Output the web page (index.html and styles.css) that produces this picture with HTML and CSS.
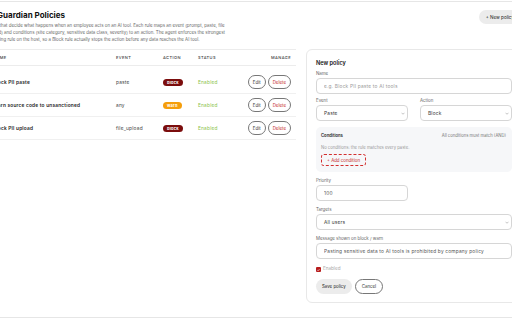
FILE: index.html
```html
<!DOCTYPE html>
<html lang="en">
<head>
  <meta charset="UTF-8">
  <meta name="viewport" content="width=device-width, initial-scale=1.0">
  <title>AI Guardian Policies</title>
  <link rel="stylesheet" href="styles.css">
</head>
<body>
  <div class="frame">
    <div class="page">
      <div class="page-head">
        <div>
          <h1>AI Guardian Policies</h1>
          <p class="lede">Rules that decide what happens when an employee acts on an AI tool. Each rule maps an event (prompt, paste, file<br>upload) and conditions (site category, sensitive data class, severity) to an action. The agent enforces the strongest<br>matching rule on the host, so a Block rule actually stops the action before any data reaches the AI tool.</p>
        </div>
        <button class="btn-soft new-btn">+ New policy</button>
      </div>

      <div class="layout">
        <table class="policies">
          <thead>
            <tr>
              <th class="col-name">Name</th>
              <th class="col-event">Event</th>
              <th class="col-action">Action</th>
              <th class="col-status">Status</th>
              <th class="col-manage">Manage</th>
            </tr>
          </thead>
          <tbody>
            <tr>
              <td class="name">Block PII paste</td>
              <td class="event">paste</td>
              <td><span class="badge block">block</span></td>
              <td class="status">Enabled</td>
              <td class="manage"><button class="btn-line">Edit</button><button class="btn-line danger">Delete</button></td>
            </tr>
            <tr>
              <td class="name">Warn source code to unsanctioned</td>
              <td class="event">any</td>
              <td><span class="badge warn">warn</span></td>
              <td class="status">Enabled</td>
              <td class="manage"><button class="btn-line">Edit</button><button class="btn-line danger">Delete</button></td>
            </tr>
            <tr>
              <td class="name">Block PII upload</td>
              <td class="event">file_upload</td>
              <td><span class="badge block">block</span></td>
              <td class="status">Enabled</td>
              <td class="manage"><button class="btn-line">Edit</button><button class="btn-line danger">Delete</button></td>
            </tr>
          </tbody>
        </table>

        <form class="card">
          <h2>New policy</h2>

          <div class="field name-field">
            <label>Name</label>
            <input type="text" class="control" placeholder="e.g. Block PII paste to AI tools">
          </div>

          <div class="field-row">
            <div class="field">
              <label>Event</label>
              <div class="control select"><span>Paste</span><svg viewBox="0 0 8 5" width="4" height="3"><path d="M1 1l3 3 3-3" fill="none" stroke="#888" stroke-width="1"/></svg></div>
            </div>
            <div class="field">
              <label>Action</label>
              <div class="control select"><span>Block</span><svg viewBox="0 0 8 5" width="4" height="3"><path d="M1 1l3 3 3-3" fill="none" stroke="#888" stroke-width="1"/></svg></div>
            </div>
          </div>

          <div class="conditions">
            <div class="cond-head">
              <strong>Conditions</strong>
              <span>All conditions must match (AND)</span>
            </div>
            <p class="cond-empty">No conditions: the rule matches every paste.</p>
            <button type="button" class="btn-dashed">+ Add condition</button>
          </div>

          <div class="field half">
            <label>Priority</label>
            <input type="text" class="control" value="100">
          </div>

          <div class="field">
            <label>Targets</label>
            <div class="control select"><span>All users</span><svg viewBox="0 0 8 5" width="4" height="3"><path d="M1 1l3 3 3-3" fill="none" stroke="#888" stroke-width="1"/></svg></div>
          </div>

          <div class="field">
            <label>Message shown on block / warn</label>
            <input type="text" class="control" value="Pasting sensitive data to AI tools is prohibited by company policy">
          </div>

          <label class="check"><span class="box">&#10003;</span>Enabled</label>

          <div class="actions">
            <button type="button" class="btn-soft">Save policy</button>
            <button type="button" class="btn-line">Cancel</button>
          </div>
        </form>
      </div>
    </div>
  </div>
</body>
</html>
```

FILE: styles.css
```css
body {
  font-family: Inter, "Noto Sans", sans-serif;
  background-color: #fff;
  color: #222;
  margin: 0;
  padding: 1px 0 0;
  overflow: hidden;
}
.frame {
  border-top: 1px solid #e6e6e6;
  border-bottom: 1px solid #e6e6e6;
  height: 315px;
  overflow: hidden;
}
.page {
  width: 534px;
  margin-left: -13px;
}
.page-head {
  display: flex;
  justify-content: space-between;
  align-items: flex-start;
  padding-top: 8px;
}
.page-head h1 {
  margin: 0;
  font-size: 8px;
  line-height: 10px;
  font-weight: 700;
  color: #111;
}
.lede {
  margin: 1.5px 0 0;
  font-size: 4.4px;
  line-height: 7px;
  color: #666;
}
button {
  font-family: inherit;
  cursor: pointer;
}
.btn-soft {
  border: none;
  background-color: #ececec;
  color: #222;
  border-radius: 8px;
  font-size: 4.6px;
  padding: 0 7px;
  height: 14px;
}
.new-btn {
  margin-top: 0;
}
.btn-line {
  border: 0.8px solid #777;
  background-color: #fff;
  color: #333;
  border-radius: 8px;
  font-size: 4.4px;
  height: 14px;
  padding: 0 4px;
}
.btn-line.danger {
  color: #c62828;
  margin-left: 2px;
}

.layout {
  display: grid;
  grid-template-columns: 309px 215px;
  gap: 10px;
  align-items: start;
  margin-top: 6.5px;
}

/* policy table */
.policies {
  border-collapse: collapse;
  width: 309px;
  border-top: 1px solid #ececec;
  font-size: 4.8px;
}
.policies th {
  text-transform: uppercase;
  font-size: 4px;
  letter-spacing: 0.4px;
  font-weight: 500;
  color: #444;
  text-align: left;
  height: 15px;
  padding: 0 0 0 6px;
  border-bottom: 1px solid #ececec;
}
.policies th.col-manage {
  text-align: right;
  padding-right: 5px;
}
.col-name { width: 117px; }
.col-event { width: 41px; }
.col-action { width: 29px; }
.col-status { width: 42px; }
.policies td {
  height: 22px;
  padding: 0 0 0 6px;
  border-bottom: 1px solid #f0f0f0;
  color: #444;
  letter-spacing: 0.2px;
}
.policies tbody tr:first-child td {
  padding-top: 5px;
}
.policies td.name {
  color: #222;
  font-weight: 600;
}
.policies td.status {
  color: #8bc34a;
}
.policies td.manage {
  text-align: right;
  padding-right: 5px;
  white-space: nowrap;
}
.badge {
  display: inline-block;
  color: #fff;
  font-size: 4px;
  font-weight: 700;
  line-height: 7px;
  padding: 0 4px;
  border-radius: 4px;
}
.badge.block { background-color: #7b0d0d; }
.badge.warn { background-color: #f59e0b; }

/* form card */
.card {
  border: 1px solid #e8e8e8;
  border-radius: 6px;
  padding: 8.5px 8px 7.5px 9px;
  display: flex;
  flex-direction: column;
  gap: 6px;
}
.card h2 {
  margin: 0 0 -2px;
  font-size: 5.6px;
  line-height: 8px;
  font-weight: 600;
  color: #111;
}
.field {
  display: flex;
  flex-direction: column;
  gap: 1px;
}
.name-field {
  margin-bottom: -1.5px;
}
.field label {
  font-size: 4.4px;
  line-height: 6px;
  color: #666;
}
.field-row {
  display: grid;
  grid-template-columns: 1fr 1fr;
  gap: 12px;
}
.field.half {
  width: 92px;
}
.control {
  box-sizing: border-box;
  height: 16px;
  border: 0.8px solid #d6d6d6;
  border-radius: 4px;
  padding: 0 7px;
  font-family: inherit;
  font-size: 4.8px;
  letter-spacing: 0.2px;
  color: #555;
  background-color: #fff;
  width: 100%;
}
.control::placeholder {
  color: #999;
}
.select {
  display: flex;
  align-items: center;
  justify-content: space-between;
  color: #333;
  padding-right: 2px;
}
.conditions {
  background-color: #f6f7f9;
  border-radius: 5px;
  padding: 6px 6px 6px 5px;
  display: flex;
  flex-direction: column;
  align-items: flex-start;
}
.cond-head {
  align-self: stretch;
  display: flex;
  justify-content: space-between;
  font-size: 4.2px;
  line-height: 6px;
  color: #777;
}
.cond-head strong {
  color: #222;
  font-weight: 600;
}
.cond-empty {
  margin: 6px 0 3px;
  font-size: 4.2px;
  line-height: 6px;
  color: #999;
}
.btn-dashed {
  border: 0.8px dashed #d32f2f;
  background: transparent;
  color: #c62828;
  border-radius: 3px;
  font-size: 4.4px;
  height: 12px;
  padding: 0 5px;
}
.check {
  display: flex;
  align-items: center;
  gap: 2px;
  font-size: 4.6px;
  line-height: 8px;
  color: #aaa;
}
.check .box {
  display: inline-block;
  width: 5px;
  height: 5px;
  background-color: #b71c1c;
  color: #fff;
  font-size: 4px;
  line-height: 5px;
  text-align: center;
  border-radius: 1px;
}
.actions {
  display: flex;
  gap: 3px;
}
.actions .btn-soft,
.actions .btn-line {
  height: 15px;
  font-size: 4.4px;
  padding: 0 6px;
}
```
